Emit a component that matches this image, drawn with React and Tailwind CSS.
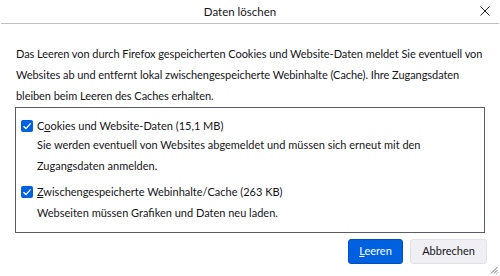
const Check = () => (
  <span className="flex h-[12px] w-[12px] shrink-0 items-center justify-center rounded-[2px] bg-[#0060df]">
    <svg width="10" height="10" viewBox="0 0 10 10" fill="none">
      <path d="M1.5 5.2 L4 7.6 L8.6 2.4" stroke="white" strokeWidth="1.4" />
    </svg>
  </span>
);

export default function App() {
  return (
    <div
      className="relative h-[276px] w-[500px] overflow-hidden bg-white text-[11px] text-[#15141a]"
      style={{ fontFamily: 'Lato, "Open Sans", sans-serif' }}
    >
      <div className="relative mx-[1px] flex h-[24px] items-center justify-center border-b border-[#bfbfc3] pr-[20px]">
        <span className="text-[11.5px]">Daten löschen</span>
        <svg
          className="absolute right-[9px] top-[6px]"
          width="10"
          height="10"
          viewBox="0 0 10 10"
        >
          <path d="M0.5 0.5 L9.5 9.5 M9.5 0.5 L0.5 9.5" stroke="#222" strokeWidth="1" />
        </svg>
      </div>

      <p className="mt-[19px] whitespace-nowrap px-[16px] leading-[21px] tracking-[-0.05px]">
        Das Leeren von durch Firefox gespeicherten Cookies und Website-Daten meldet Sie eventuell von
        <br />
        Websites ab und entfernt lokal zwischengespeicherte Webinhalte (Cache). Ihre Zugangsdaten
        <br />
        bleiben beim Leeren des Caches erhalten.
      </p>

      <div className="ml-[15px] mt-[1px] h-[126px] w-[470px] whitespace-nowrap border border-[#5b5b66] px-[5px] pt-[12px]">
        <div className="flex h-[12px] items-center gap-[4px] leading-[12px]">
          <Check />
          <span>
            C<span className="underline">o</span>okies und Website-Daten (15,1 MB)
          </span>
        </div>
        <p className="mt-[2px] pl-[16px] leading-[21px]">
          Sie werden eventuell von Websites abgemeldet und müssen sich erneut mit den
          <br />
          Zugangsdaten anmelden.
        </p>
        <div className="mt-[10px] flex h-[12px] items-center gap-[4px] leading-[12px]">
          <Check />
          <span>
            <span className="underline">Z</span>wischengespeicherte Webinhalte/Cache (263 KB)
          </span>
        </div>
        <p className="mt-[4px] pl-[16px] leading-[21px]">
          Webseiten müssen Grafiken und Daten neu laden.
        </p>
      </div>

      <div className="mr-[13px] mt-[6px] flex justify-end gap-[7px]">
        <button className="h-[25px] w-[55px] rounded-[3px] border border-[#0250bb] bg-[#0061e0] text-white">
          <span className="underline">L</span>eeren
        </button>
        <button className="h-[25px] w-[77px] rounded-[3px] border border-[#e2e2e6] bg-[#f0f0f4]">
          Abbrechen
        </button>
      </div>

      <svg className="absolute bottom-[2px] right-[2px]" width="8" height="8" viewBox="0 0 8 8">
        <path d="M7.5 1 L1 7.5 M7.5 4 L4 7.5 M7.5 6.5 L6.5 7.5" stroke="#777" strokeWidth="1" />
      </svg>
    </div>
  );
}
